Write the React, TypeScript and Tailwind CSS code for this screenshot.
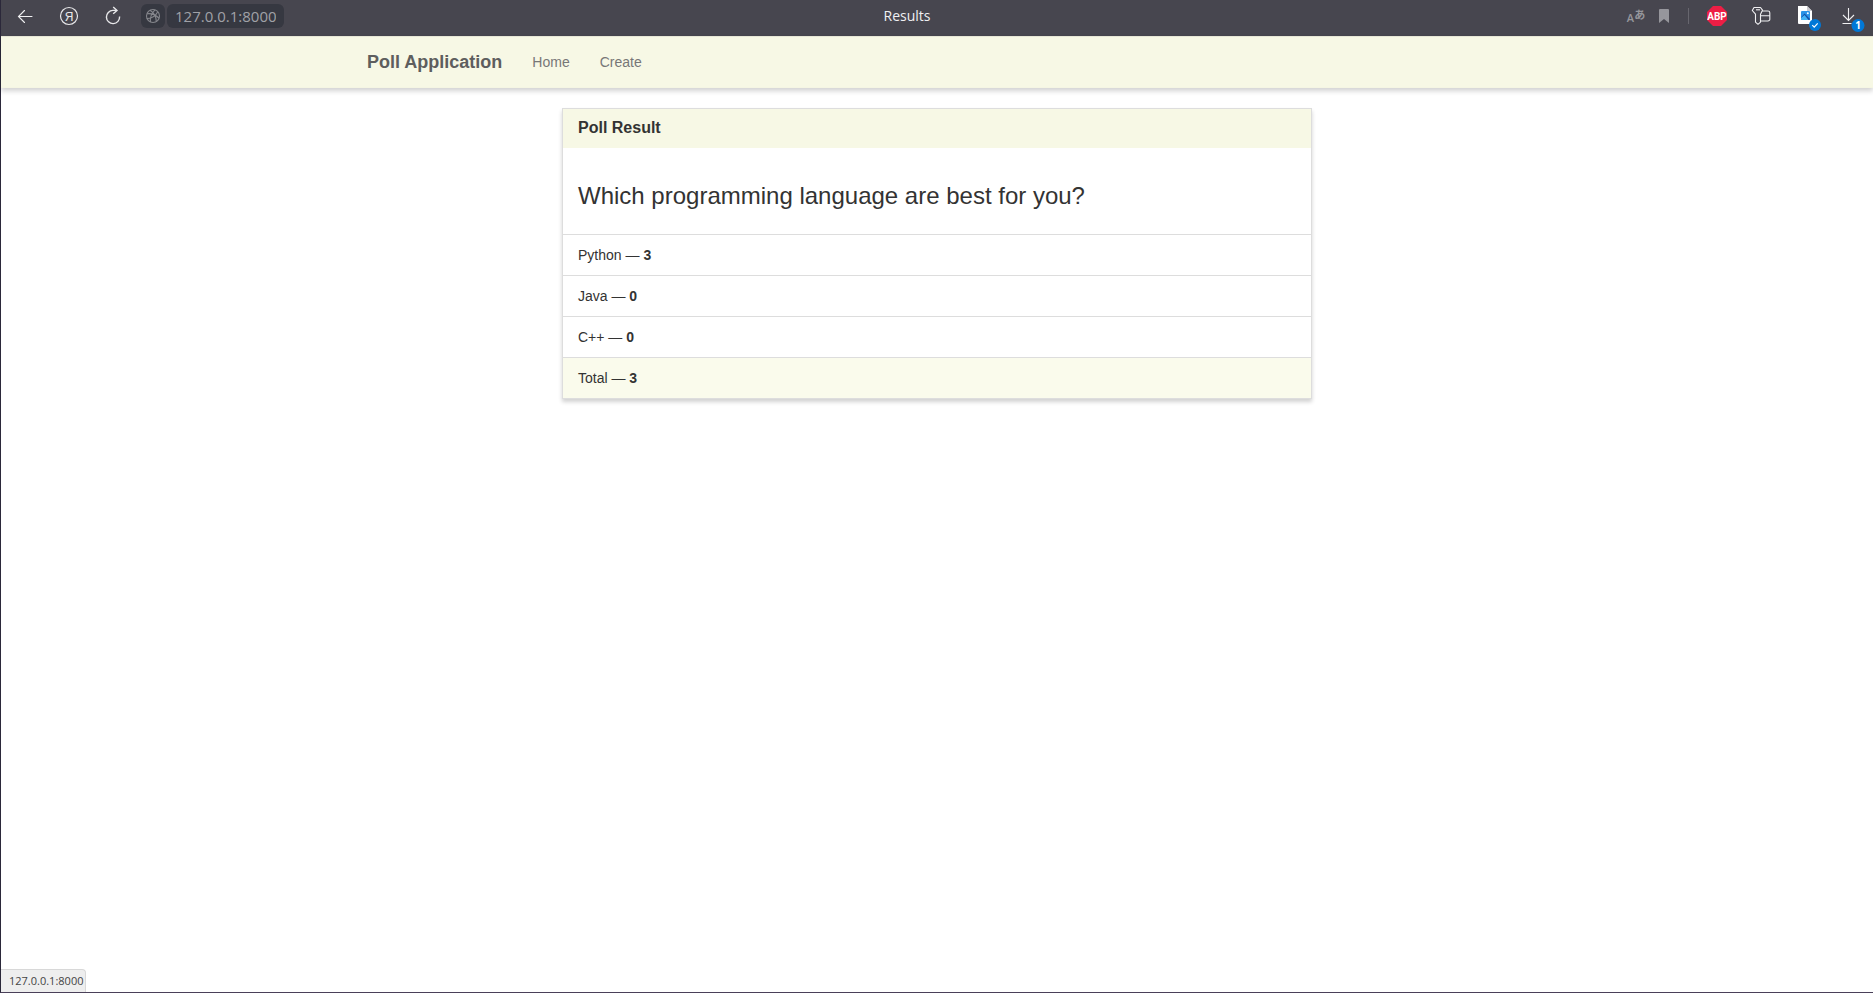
import type { ReactNode } from 'react';

type Answer = { label: string; votes: number };

const answers: Answer[] = [
  { label: 'Python', votes: 3 },
  { label: 'Java', votes: 0 },
  { label: 'C++', votes: 0 },
];

function ToolButton({ label, children, narrow = false }: { label: string; children: ReactNode; narrow?: boolean }) {
  return (
    <button
      type="button"
      aria-label={label}
      className={`${narrow ? 'w-7' : 'w-11'} flex h-8 shrink-0 items-center justify-center`}
    >
      {children}
    </button>
  );
}

function BackIcon() {
  return (
    <svg width="16" height="16" viewBox="0 0 16 16" fill="none" stroke="#f0f0f2" strokeWidth="1.1" strokeLinecap="round">
      <path d="M1.5 8.5H15M7.5 2.5l-6 6 6 6" />
    </svg>
  );
}

function ReloadIcon() {
  return (
    <svg width="18" height="20" viewBox="0 0 18 20" fill="none" stroke="#e8e8ea" strokeWidth="1.4">
      <path d="M15.6 10.5A6.6 6.6 0 1 1 9 4.4h3.6" />
      <path d="M9.2 1l3.8 3.4-3.8 3.4" />
    </svg>
  );
}

function GlobeIcon() {
  return (
    <svg width="16" height="16" viewBox="0 0 16 16" fill="none" stroke="#85868c" strokeWidth="1.1">
      <circle cx="8" cy="8" r="6.5" />
      <path d="M2 5.8c3.5-.6 8 .8 12 4.2M10 1.8C6.8 4.800 5 9.500 5.400 14M5 2.200c4 2.500 6.300 6.800 6.300 11.300M1.800 10.500C6 10.800 10.500 8 12.800 3.800" />
    </svg>
  );
}

function BookmarkIcon() {
  return (
    <svg width="10" height="14" viewBox="0 0 10 14" fill="#96969c">
      <path d="M1 0h8a1 1 0 0 1 1 1v13L5 10 0 14V1a1 1 0 0 1 1-1z" />
    </svg>
  );
}

function AdBlockIcon() {
  return (
    <svg width="20" height="20" viewBox="0 0 20 20">
      <path d="M6 0h8l6 6v8l-6 6H6l-6-6V6z" fill="#ed1e45" />
      <text x="10" y="13.5" fill="#fff" fontSize="10" fontWeight="700" textAnchor="middle" className="font-['Roboto',sans-serif]">
        ABP
      </text>
    </svg>
  );
}

function KeyIcon() {
  return (
    <svg width="20" height="20" viewBox="0 0 20 20" fill="none" stroke="#f0f0f2" strokeWidth="1.1" strokeLinejoin="round">
      <path d="M3 1.5h6.500l2 2.700-2 4v8L7 18.300 4.500 16.200v-8L1.300 4.500z" />
      <path d="M5 3.800h4" />
      <path d="M11.200 5H17a1.800 1.800 0 0 1 1.800 1.800v6.400A1.800 1.800 0 0 1 17 15H9.500M9.500 9.800h9.300" />
    </svg>
  );
}

function PictureFileIcon() {
  return (
    <svg width="24" height="26" viewBox="0 0 24 26">
      <path d="M1 0h9l5 5v12a1 1 0 0 1-1 1H2a1 1 0 0 1-1-1z" fill="#fff" />
      <path d="M10 0v5h5z" fill="#c9c9cf" />
      <rect x="4" y="5" width="9" height="9" rx="1" fill="#2b93e8" />
      <path d="M4 11.500L7.500 7.500l5.500 5.500a1 1 0 0 1-1 1H7z" fill="#1450a8" />
      <path d="M4 12l3.500-3 4 5H5a1 1 0 0 1-1-1z" fill="#45b3f5" />
      <circle cx="10.800" cy="7.200" r="1" fill="#fff" />
      <circle cx="18" cy="19" r="6" fill="#0078d7" />
      <path d="M15.300 19.200l1.900 1.900 3.500-3.700" fill="none" stroke="#fff" strokeWidth="1.2" />
    </svg>
  );
}

function DownloadIcon() {
  return (
    <svg width="24" height="26" viewBox="0 0 24 26">
      <path d="M7.500 2v12.500M2 9l5.500 5.500L13 9M1.500 17.500h9" fill="none" stroke="#f0f0f2" strokeWidth="1.1" />
      <circle cx="17" cy="19.500" r="6.500" fill="#0078d7" />
      <text x="17" y="23" fill="#fff" fontSize="10" fontWeight="700" textAnchor="middle" className="font-['Open_Sans',sans-serif]">
        1
      </text>
    </svg>
  );
}

function BrowserBar() {
  return (
    <div className="flex h-9 items-start bg-[#47464f] px-0.5 font-['Open_Sans','Noto_Sans',sans-serif]">
      <ToolButton label="Back">
        <BackIcon />
      </ToolButton>
      <ToolButton label="Yandex">
        <svg width="20" height="20" viewBox="0 0 20 20">
          <circle cx="10" cy="10" r="8.5" fill="none" stroke="#e8e8ea" strokeWidth="1.2" />
          <text x="10" y="14.5" fill="#e8e8ea" fontSize="12" textAnchor="middle" className="font-['Liberation_Sans',sans-serif]">
            Я
          </text>
        </svg>
      </ToolButton>
      <ToolButton label="Reload">
        <ReloadIcon />
      </ToolButton>
      <button
        type="button"
        aria-label="Site information"
        className="mt-1 mr-0.5 ml-1.5 flex size-6 shrink-0 items-center justify-center rounded-md bg-[#363841]"
      >
        <GlobeIcon />
      </button>
      <input
        aria-label="Address"
        defaultValue="127.0.0.1:8000"
        className="mt-1 h-6 w-[117px] shrink-0 rounded-md bg-[#363841] px-2 text-[15px] leading-6 text-[#a0a1a7] outline-none"
      />
      <div className="flex-1 text-center text-sm leading-8 text-[#f0f0f2]">Results</div>
      <div className="flex w-[341px] shrink-0 items-center justify-end">
        <ToolButton label="Translate" narrow>
          <span className="flex items-center text-[#96969c]">
            <span className="pt-1 text-[11px] leading-4 font-semibold">A</span>
            <span className="pb-1 font-['Noto_Sans_CJK_JP',sans-serif] text-[11px] leading-4 font-bold">あ</span>
          </span>
        </ToolButton>
        <ToolButton label="Bookmark" narrow>
          <BookmarkIcon />
        </ToolButton>
        <div className="mr-1.5 ml-2.5 h-4 w-px bg-[#67666e]" />
        <ToolButton label="Adblock Plus">
          <AdBlockIcon />
        </ToolButton>
        <ToolButton label="Passwords">
          <KeyIcon />
        </ToolButton>
        <ToolButton label="Screenshots">
          <span className="pt-1.5 pl-2">
            <PictureFileIcon />
          </span>
        </ToolButton>
        <ToolButton label="Downloads">
          <span className="pt-1.5 pl-2">
            <DownloadIcon />
          </span>
        </ToolButton>
      </div>
    </div>
  );
}

function SiteHeader() {
  return (
    <header className="border-y border-t-[#e7e7d6] border-b-[#f5f6e3] bg-[#f7f8e5] shadow-[0_3px_5px_rgba(0,0,0,0.18)]">
      <nav className="mx-auto flex h-[50px] max-w-[1170px] items-center gap-[30px] px-[15px] leading-5">
        <a href="#" className="text-lg leading-5 font-bold text-[#5e5e5e]">
          Poll Application
        </a>
        <a href="#" className="text-sm leading-5 text-[#777]">
          Home
        </a>
        <a href="#" className="text-sm leading-5 text-[#777]">
          Create
        </a>
      </nav>
    </header>
  );
}

function ResultRow({ label, votes, total = false }: Answer & { total?: boolean }) {
  return (
    <li className={`${total ? 'bg-[#fafbec]' : 'bg-white'} border-t border-[#ddd] px-[15px] py-2.5`}>
      {label} — <b>{votes}</b>
    </li>
  );
}

export default function App() {
  const total = answers.reduce((sum, answer) => sum + answer.votes, 0);

  return (
    <div className="flex min-h-screen flex-col border-b border-l border-b-[#4a4059] border-l-[#2b283a] bg-white font-['Liberation_Sans',Arial,sans-serif] text-sm leading-5 text-[#333]">
      <BrowserBar />
      <SiteHeader />
      <main className="flex-1 px-4 pt-5">
        <section className="mx-auto max-w-[750px] border border-[#ddd] shadow-[0_3px_4px_rgba(0,0,0,0.18)]">
          <h1 className="bg-[#f7f8e5] px-[15px] pt-2.5 pb-3 text-base leading-[17px] font-bold">Poll Result</h1>
          <h2 className="px-[15px] pt-[35px] pb-[25px] text-2xl leading-[26px]">
            Which programming language are best for you?
          </h2>
          <ul>
            {answers.map((answer) => (
              <ResultRow key={answer.label} {...answer} />
            ))}
            <ResultRow label="Total" votes={total} total />
          </ul>
        </section>
      </main>
      <footer className="flex">
        <div className="h-[23px] rounded-tr border-t border-r border-[#d8d8d8] bg-[#eee] pr-0.5 pl-2 font-['Open_Sans','Noto_Sans',sans-serif] text-[11px] leading-[21px] text-[#444]">
          127.0.0.1:8000
        </div>
      </footer>
    </div>
  );
}
